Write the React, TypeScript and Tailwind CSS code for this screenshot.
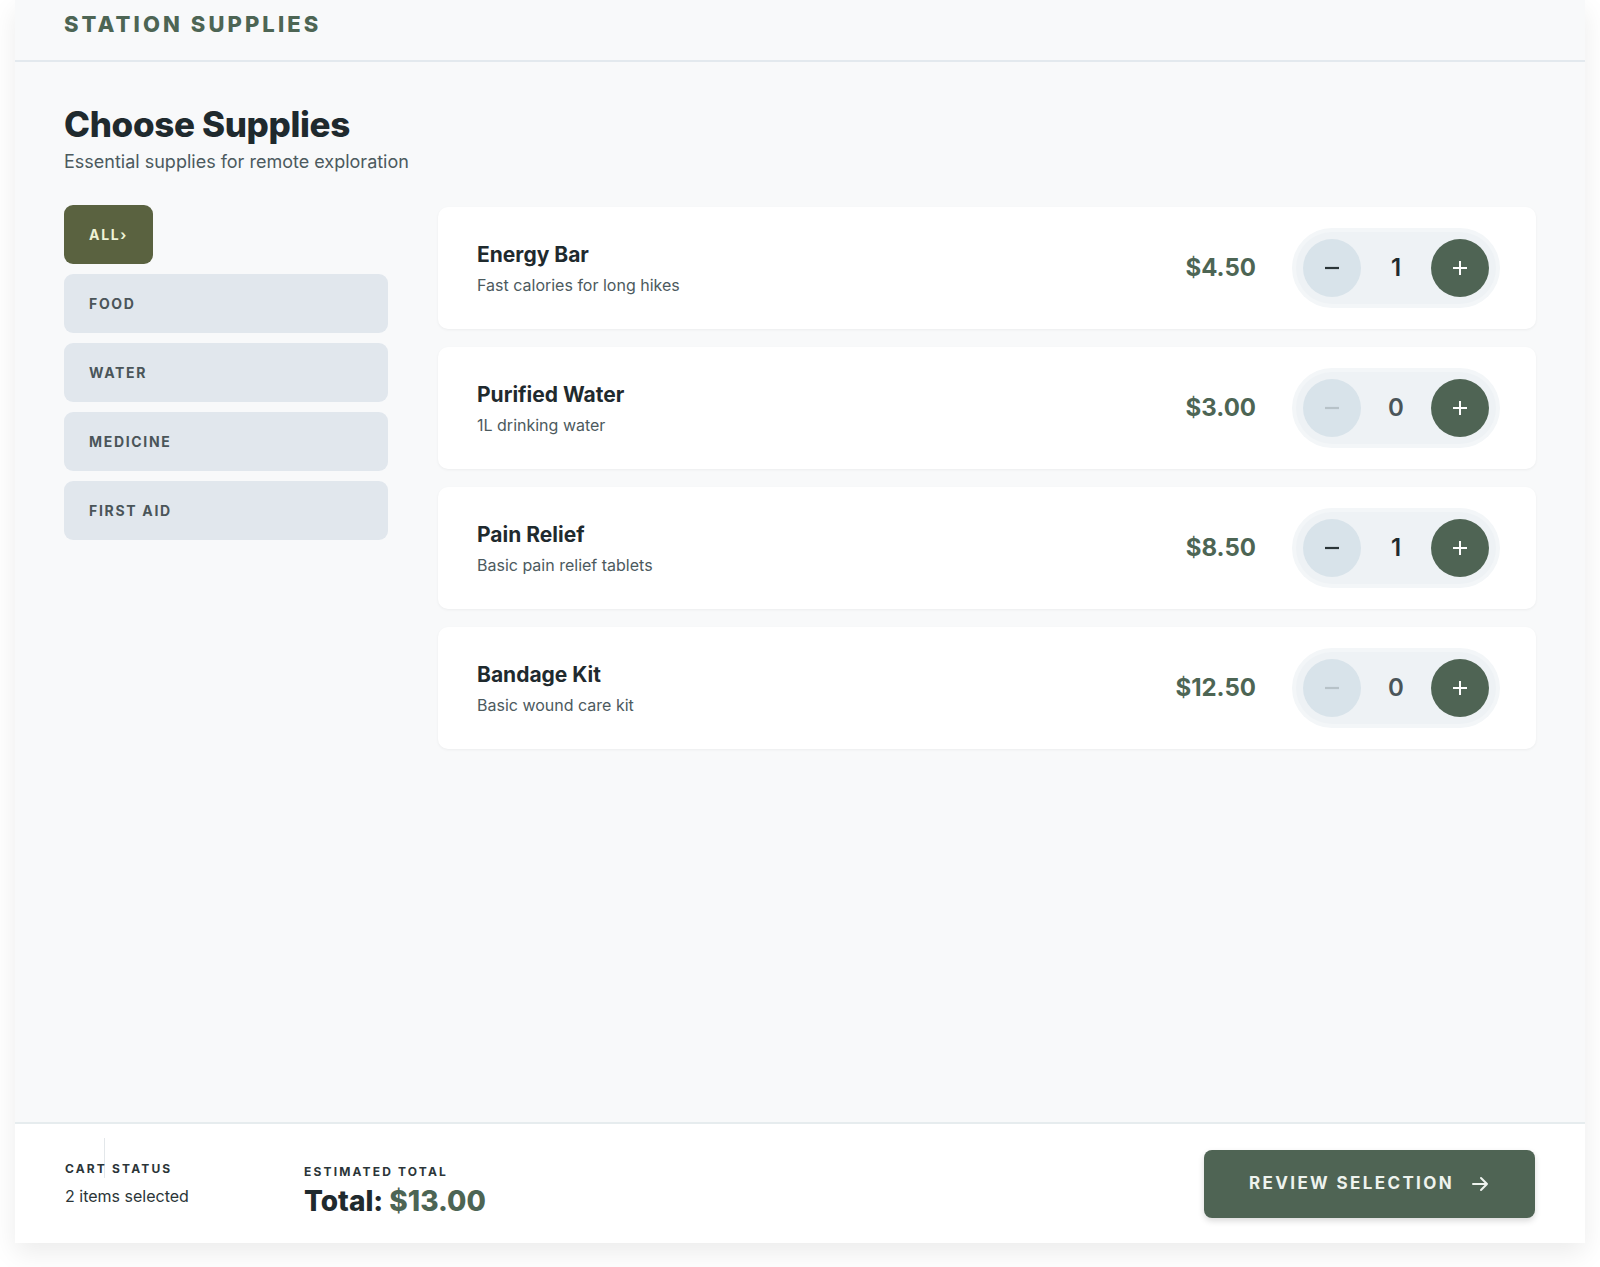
import React, { useState } from "react";

const items = [
  { name: "Energy Bar", desc: "Fast calories for long hikes", price: 4.5, qty: 1 },
  { name: "Purified Water", desc: "1L drinking water", price: 3.0, qty: 0 },
  { name: "Pain Relief", desc: "Basic pain relief tablets", price: 8.5, qty: 1 },
  { name: "Bandage Kit", desc: "Basic wound care kit", price: 12.5, qty: 0 },
];

export default function App() {
  const [qty, setQty] = useState(items.map((i) => i.qty));
  const total = items.reduce((s, it, i) => s + it.price * qty[i], 0);
  const count = qty.reduce((a, b) => a + b, 0);
  return (
    <div className="bg-white min-h-[1267px] px-[15px]" style={{ fontFamily: "Inter, 'Noto Sans', sans-serif" }}>
      <div className="bg-[#f8f9fa] h-[1243px] flex flex-col shadow-[0_10px_25px_rgba(0,0,0,0.08)]">
        <header className="h-[62px] border-b-2 border-[#e3e9ee] px-[49px] flex items-start pt-[8px]">
          <h1 className="text-[22px] font-extrabold tracking-[0.14em] text-[#4d6554]">STATION SUPPLIES</h1>
        </header>
        <main className="flex-1 px-[49px] pt-[40px]">
          <h2 className="text-[35px] font-extrabold text-[#1f2a2e] tracking-[-0.01em] leading-[44px]">Choose Supplies</h2>
          <p className="text-[18px] text-[#4c5a5e] mt-[2px]">Essential supplies for remote exploration</p>
          <div className="flex gap-[50px] mt-[30px]">
            <nav className="w-[324px] flex flex-col gap-[10px] items-start">
              <button className="h-[59px] px-[25px] rounded-[9px] bg-[#5a6240] text-[#eef3d6] text-[14px] font-bold tracking-[0.12em]">ALL›</button>
              {["FOOD", "WATER", "MEDICINE", "FIRST AID"].map((c) => (
                <button key={c} className="w-full h-[59px] px-[25px] text-left rounded-[9px] bg-[#e1e7ed] text-[#4a5559] text-[14px] font-bold tracking-[0.12em]">{c}</button>
              ))}
            </nav>
            <div className="flex-1 flex flex-col gap-[18px] pt-[2px]">
              {items.map((it, i) => (
                <div key={it.name} className="h-[122px] bg-white rounded-[10px] shadow-[0_1px_3px_rgba(0,0,0,0.05)] flex items-center pl-[39px] pr-[40px]">
                  <div className="flex-1">
                    <div className="text-[21px] font-bold text-[#1f2a2e]">{it.name}</div>
                    <div className="text-[16px] text-[#4c5a5e] mt-[2px]">{it.desc}</div>
                  </div>
                  <div className="text-[24px] font-bold text-[#4d6554] mr-[40px]">${it.price.toFixed(2)}</div>
                  <div className="w-[200px] h-[72px] rounded-full bg-[#eef2f5] ring-4 ring-[#f3f6f8] flex items-center justify-between px-[7px]">
                    <button onClick={() => setQty(qty.map((q, j) => (j === i ? Math.max(0, q - 1) : q)))} className={`w-[58px] h-[58px] rounded-full bg-[#d8e3ea] flex items-center justify-center ${qty[i] === 0 ? "text-[#b7c2c8]" : "text-[#2b3538]"}`}>
                      <svg width="18" height="18" viewBox="0 0 18 18"><path d="M2 9h14" stroke="currentColor" strokeWidth="2.2" /></svg>
                    </button>
                    <span className={`text-[24px] font-semibold ${qty[i] === 0 ? "text-[#4a5559]" : "text-[#1f2a2e]"}`}>{qty[i]}</span>
                    <button onClick={() => setQty(qty.map((q, j) => (j === i ? q + 1 : q)))} className="w-[58px] h-[58px] rounded-full bg-[#4f6454] text-white flex items-center justify-center">
                      <svg width="18" height="18" viewBox="0 0 18 18"><path d="M2 9h14M9 2v14" stroke="currentColor" strokeWidth="2" /></svg>
                    </button>
                  </div>
                </div>
              ))}
            </div>
          </div>
        </main>
        <footer className="h-[121px] bg-white border-t-2 border-[#e6ecee] flex items-center pl-[49px] pr-[50px]">
          <div className="pr-[40px] border-r border-[#e3e7ea] self-start mt-[14px] pt-[28px] pb-[0px] h-[40px]">
          </div>
          <div className="flex items-center flex-1 -ml-[40px]">
            <div className="w-[222px] relative">
              <div className="text-[12px] font-bold tracking-[0.18em] text-[#2b3538]">CART STATUS</div>
              <div className="text-[16px] text-[#2b3538] mt-[6px]">{count} items selected</div>
            </div>
            <div className="pl-[17px] pt-[14px]">
              <div className="text-[12px] font-bold tracking-[0.18em] text-[#2b3538]">ESTIMATED TOTAL</div>
              <div className="text-[28px] font-extrabold text-[#1f2a2e] leading-[36px] mt-[2px]">Total: <span className="text-[#4d6554]">${total.toFixed(2)}</span></div>
            </div>
          </div>
          <button className="h-[68px] w-[331px] rounded-[8px] bg-[#4f6454] text-[#eef3ee] text-[17px] font-bold tracking-[0.14em] flex items-center justify-center gap-[16px] shadow-[0_3px_6px_rgba(0,0,0,0.15)]">
            REVIEW SELECTION
            <svg width="20" height="20" viewBox="0 0 20 20" fill="none" stroke="currentColor" strokeWidth="2" strokeLinecap="round" strokeLinejoin="round"><path d="M3 10h14M11 4l6 6-6 6" /></svg>
          </button>
        </footer>
      </div>
    </div>
  );
}
